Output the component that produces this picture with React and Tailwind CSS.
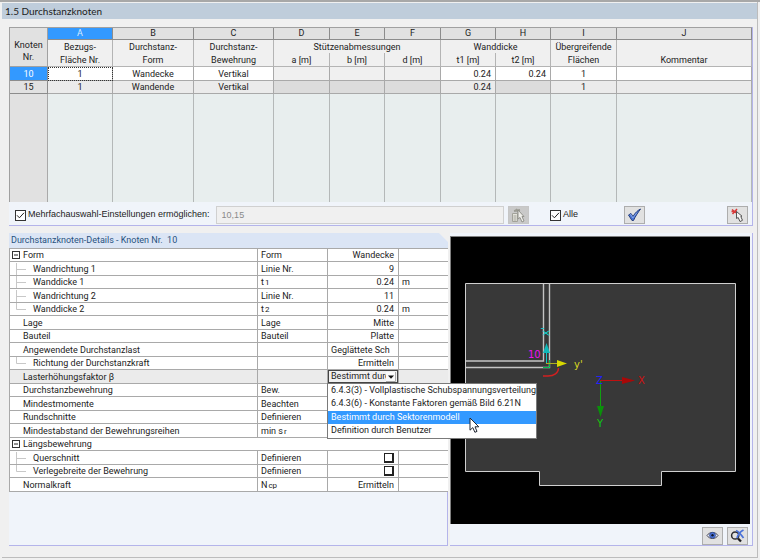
import { useState } from 'react';
import clsx from 'clsx';

const letters = ['A', 'B', 'C', 'D', 'E', 'F', 'G', 'H', 'I', 'J'];

const nodes = [
  { nr: '10', cells: ['1', 'Wandecke', 'Vertikal', null, null, null, '0.24', '0.24', '1', ''] },
  { nr: '15', cells: ['1', 'Wandende', 'Vertikal', null, null, null, '0.24', null, '1', ''] },
];

const methods = [
  '6.4.3(3) - Vollplastische Schubspannungsverteilung',
  '6.4.3(6) - Konstante Faktoren gemäß Bild 6.21N',
  'Bestimmt durch Sektorenmodell',
  'Definition durch Benutzer',
];

const details = [
  { tree: 'open', label: 'Form', symbol: 'Form', value: 'Wandecke' },
  { tree: 'child', label: 'Wandrichtung 1', symbol: 'Linie Nr.', value: '9' },
  { tree: 'child', label: 'Wanddicke 1', symbol: 't', sub: '1', value: '0.24', unit: 'm' },
  { tree: 'child', label: 'Wandrichtung 2', symbol: 'Linie Nr.', value: '11' },
  { tree: 'last', label: 'Wanddicke 2', symbol: 't', sub: '2', value: '0.24', unit: 'm' },
  { label: 'Lage', symbol: 'Lage', value: 'Mitte' },
  { label: 'Bauteil', symbol: 'Bauteil', value: 'Platte' },
  { label: 'Angewendete Durchstanzlast', value: 'Geglättete Sch', left: true },
  { tree: 'last', label: 'Richtung der Durchstanzkraft', value: 'Ermitteln' },
  { label: 'Lasterhöhungsfaktor β', select: true },
  { label: 'Durchstanzbewehrung', symbol: 'Bew.' },
  { label: 'Mindestmomente', symbol: 'Beachten' },
  { label: 'Rundschnitte', symbol: 'Definieren' },
  { label: 'Mindestabstand der Bewehrungsreihen', symbol: 'min s', sub: 'r' },
  { tree: 'open', label: 'Längsbewehrung', group: true },
  { tree: 'child', label: 'Querschnitt', symbol: 'Definieren', check: true },
  { tree: 'last', label: 'Verlegebreite der Bewehrung', symbol: 'Definieren', check: true },
  { label: 'Normalkraft', symbol: 'N', sub: 'cp', value: 'Ermitteln' },
];

function ToolButton({ label, disabled, className, children }) {
  return (
    <button
      type="button"
      aria-label={label}
      disabled={disabled}
      className={clsx(
        'flex h-[18px] w-[21px] items-center justify-center border',
        disabled ? 'border-[#c6c6c6] bg-[#c9c9c9]' : 'border-[#adadad] bg-[#e1e1e1]',
        className
      )}
    >
      {children}
    </button>
  );
}

function CheckBox({ id, label }) {
  return (
    <div className="flex items-center gap-[2px]">
      <span className="relative flex">
        <input
          id={id}
          type="checkbox"
          defaultChecked
          className="h-[11px] w-[11px] appearance-none border border-[#333] bg-white"
        />
        <svg className="pointer-events-none absolute inset-0" width="11" height="11" viewBox="0 0 11 11" fill="none" stroke="#222">
          <path d="M2 5.3 4.4 7.8 9 2.8" />
        </svg>
      </span>
      <label htmlFor={id}>{label}</label>
    </div>
  );
}

function Pointer({ className }) {
  return (
    <svg className={className} width="11" height="17" viewBox="0 0 11 17">
      <path d="M1 1V13.2L3.8 10.6 5.9 15.3 8 14.4 6 9.8H9.8Z" fill="#fff" stroke="#222733" />
    </svg>
  );
}

function TreeMark({ kind }) {
  if (!kind) return <span className="w-[13px]" />;
  if (kind === 'open') {
    return (
      <svg className="shrink-0" width="13" height="12" viewBox="0 0 13 12" fill="none">
        <rect x="2.5" y="2.5" width="7" height="7" stroke="#333" />
        <path d="M4 6H8" stroke="#222" />
      </svg>
    );
  }
  return (
    <svg className="shrink-0 overflow-visible" width="23" height="12" viewBox="0 0 23 12" fill="none" stroke="#c8c8c8">
      <path d={kind === 'last' ? 'M6.5 0V6.5H16' : 'M6.5 0V12M6.5 6.5H16'} />
    </svg>
  );
}

function NodeTable() {
  const head = 'border-r border-[#b4b4b4] p-0 font-normal';
  return (
    <table className="w-full table-fixed border-separate border-spacing-0 border-l border-t border-[#a0a0a0] text-center leading-[12px]">
      <colgroup>
        <col className="w-[38px]" />
        <col className="w-[65px]" />
        <col className="w-[81px]" />
        <col className="w-[80px]" />
        <col className="w-[56px]" />
        <col className="w-[55px]" />
        <col className="w-[56px]" />
        <col className="w-[55px]" />
        <col className="w-[55px]" />
        <col className="w-[66px]" />
        <col />
      </colgroup>
      <thead className="bg-[#f0f0f0]">
        <tr className="h-[12px]">
          <th rowSpan={3} className="border-b border-r border-[#a0a0a0] bg-[#e1e1e1] p-0 pt-[8px] font-normal">
            Knoten
            <br />
            Nr.
          </th>
          {letters.map((l) => (
            <th
              key={l}
              className={clsx(
                'border-b border-r border-[#8c8c8c] p-0 font-normal leading-[11px]',
                l === 'A' ? 'bg-[#3399ff] text-[#d8ecff]' : 'bg-[#e1e1e1]'
              )}
            >
              {l}
            </th>
          ))}
        </tr>
        <tr className="h-[13px]">
          <th className={head}>Bezugs-</th>
          <th className={head}>Durchstanz-</th>
          <th className={head}>Durchstanz-</th>
          <th colSpan={3} className={head}>Stützenabmessungen</th>
          <th colSpan={2} className={head}>Wanddicke</th>
          <th className={head}>Übergreifende</th>
          <th className={head} />
        </tr>
        <tr className="h-[14px]">
          {['Fläche Nr.', 'Form', 'Bewehrung', 'a [m]', 'b [m]', 'd [m]', 't1 [m]', 't2 [m]', 'Flächen', 'Kommentar'].map((t) => (
            <th key={t} className={clsx(head, 'border-b')}>{t}</th>
          ))}
        </tr>
      </thead>
      <tbody>
        {nodes.map((n, row) => (
          <tr key={n.nr} className={row === 0 ? 'h-[14px] bg-white' : 'h-[13px] bg-[#ebebeb]'}>
            <th
              className={clsx(
                'border-b border-r border-[#8c8c8c] p-0 font-normal',
                row === 0 ? 'bg-[#3399ff] text-white' : 'bg-[#e1e1e1]'
              )}
            >
              {n.nr}
            </th>
            {n.cells.map((c, i) => (
              <td
                key={letters[i]}
                className={clsx(
                  'border-b border-r border-[#a9a9a9] p-0',
                  c === null && (row === 0 ? 'bg-[#f0f0f0]' : 'bg-[#dcdcdc]'),
                  (i === 6 || i === 7) && 'pr-[4px] text-right',
                  row === 0 && i === 0 && 'outline-1 -outline-offset-1 outline-dotted outline-[#333]'
                )}
              >
                {c}
              </td>
            ))}
          </tr>
        ))}
        <tr className="h-[108px]">
          <td className="border-r border-[#a9a9a9] bg-[#e1e1e1]" />
          {letters.map((l) => (
            <td key={l} className="border-r border-[#b4b8b8] bg-[#e8eeee]" />
          ))}
        </tr>
      </tbody>
    </table>
  );
}

function NodeToolbar() {
  return (
    <div className="flex h-[23px] items-center pl-[6px] pr-[4px] pt-[3px] font-['Liberation_Sans'] text-[9px]">
      <CheckBox id="multi" label="Mehrfachauswahl-Einstellungen ermöglichen:" />
      <input
        aria-label="Knoten"
        disabled
        defaultValue="10,15"
        className="ml-[6px] h-[18px] min-w-0 flex-1 border border-[#d0d0d0] bg-[#f0f0f0] px-[5px] text-[#8a8a8a]"
      />
      <ToolButton label="Auswahl übernehmen" disabled className="ml-[4px] mr-[21px]">
        <svg width="15" height="15" viewBox="0 0 15 15" fill="none">
          <path d="M1.5 5.5H6.5V13.5H1.5Z" fill="#e4e4dc" stroke="#a2a29a" />
          <path d="M2.5 8H5.5M2.5 10H5.5M2.5 12H5.5" stroke="#a2a29a" />
          <path d="M3 3 9 2M5 1 8 5" stroke="#9c9c94" strokeWidth="2" />
          <path d="M7 2V11L9 9.5 11 14 13 13 11 8.5H13Z" fill="#eeeeea" stroke="#92928c" />
        </svg>
      </ToolButton>
      <CheckBox id="all" label="Alle" />
      <div className="flex w-[170px] justify-between pl-[46px]">
        <ToolButton label="Anwenden">
          <svg width="15" height="14" viewBox="0 0 15 14">
            <path d="M1.5 7 4 5.5 6 8.5C8 5 10.5 2.5 13.5 1 11 4.5 8.5 8 6.5 12.5H5Z" fill="#4a74d4" stroke="#27407f" strokeWidth="1" />
            <path d="M2.8 7 4 6.5 5.8 10 10 4.5" fill="none" stroke="#8fadf0" strokeWidth=".8" />
          </svg>
        </ToolButton>
        <ToolButton label="Knoten wählen">
          <svg width="15" height="15" viewBox="0 0 15 15">
            <path d="M2 1.5 7 5.5M7 1 2.5 6M1.5 3.5H7" stroke="#d83a3a" strokeWidth="1.5" />
            <path d="M6.5 3.5V10.5L8.2 9.5 10 13.6 12.5 12.3 10.8 8.5 12 8.2Z" fill="#f4f4f4" stroke="#555" />
          </svg>
        </ToolButton>
      </div>
    </div>
  );
}

function MethodSelect() {
  const [method, setMethod] = useState(methods[2]);
  return (
    <div className="relative">
      <div className="flex h-[13px] items-center border border-[#444] bg-[#f0f0f0] pr-[1px]">
        <select
          aria-label="Lasterhöhungsfaktor β"
          value={method}
          onChange={(e) => setMethod(e.target.value)}
          className="h-[11px] min-w-0 flex-1 appearance-none pl-[2px] leading-[11px] outline-none"
        >
          {methods.map((m) => (
            <option key={m}>{m}</option>
          ))}
        </select>
        <svg className="shrink-0 bg-[#fafafa]" width="10" height="10" viewBox="0 0 10 10">
          <path d="M2 3.5H8L5 6.8Z" fill="#111" />
          <path d="M0 9.5H9.5V0" fill="none" stroke="#aaa" />
        </svg>
      </div>
      <ul
        role="listbox"
        className="absolute -left-px top-[13px] z-10 w-[210px] border border-[#7a7a7a] bg-white text-left"
      >
        {methods.map((m) => (
          <li
            key={m}
            role="option"
            aria-selected={m === method}
            onClick={() => setMethod(m)}
            className={clsx(
              'whitespace-nowrap pl-[3px] odd:h-[13px] even:h-[14px]',
              m === method && 'bg-[#3399ff] text-white'
            )}
          >
            {m}
          </li>
        ))}
        <Pointer className="pointer-events-none absolute left-[141px] top-[33px]" />
      </ul>
    </div>
  );
}

function DetailsTable() {
  return (
    <table className="w-full table-fixed border-separate border-spacing-0 border-l border-t border-[#a9a9a9] bg-white leading-[12px]">
      <colgroup>
        <col />
        <col className="w-[70px]" />
        <col className="w-[71px]" />
        <col className="w-[49px]" />
      </colgroup>
      <tbody>
        {details.map((d) => {
          const cell = clsx('border-b border-[#a9a9a9] p-0', !d.group && 'border-r');
          return (
            <tr key={d.label} className={clsx('odd:h-[13px] even:h-[14px]', d.select && 'bg-[#ebebeb]')}>
              <td className={cell}>
                <div className="flex h-[12px] items-center whitespace-nowrap">
                  <TreeMark kind={d.tree} />
                  {d.label}
                </div>
              </td>
              <td className={cell}>
                <div className="flex h-[12px] items-baseline pl-[3px]">
                  {d.symbol}
                  {d.sub && <span className="ml-px text-[8px]">{d.sub}</span>}
                </div>
              </td>
              <td className={cell}>
                {d.select ? (
                  <MethodSelect />
                ) : d.check ? (
                  <input
                    type="checkbox"
                    aria-label={d.label}
                    className="ml-auto mr-[4px] block h-[10px] w-[10px] appearance-none border border-b-2 border-r-2 border-[#222] bg-white"
                  />
                ) : (
                  <div className={d.left ? 'pl-[3px]' : 'pr-[4px] text-right'}>{d.value}</div>
                )}
              </td>
              <td className="border-b border-[#a9a9a9] p-0 pl-[3px]">{d.unit}</td>
            </tr>
          );
        })}
      </tbody>
    </table>
  );
}

function Drawing() {
  return (
    <svg viewBox="451 237 299 287" className="block w-full flex-1 bg-black" fill="none" fontFamily="DejaVu Sans, sans-serif" fontSize="10">
      <path d="M465.5 283.5H735.5V471.5H661.5V485.5H539.5V471.5H465.5Z" fill="#383838" stroke="#d0d0d0" />
      <path d="M466 361H543.5V284M466 367.5H549.5V284" stroke="#c4c4c4" strokeWidth="1.4" />
      <text x="528" y="358" fill="#f010f0">10</text>

      {/* local axes of the wall corner */}
      <path d="M543 367.5H549.5V360" stroke="#00c050" />
      <path d="M546.5 364V352" stroke="#10c8c8" />
      <path d="M546.5 343 543 353H550Z" fill="#10b8b8" />
      <path d="M546 363.5H558" stroke="#b0b020" />
      <path d="M567 363.5 557 360V367Z" fill="#d8d800" />
      <text x="574" y="368" fill="#d8d820">y'</text>
      <text transform="translate(549 336) rotate(-90)" fill="#10d8d8">x'</text>
      <path d="M543 376H548C554 376 558.5 373 558.5 368" stroke="#d02020" strokeWidth="1.4" />

      {/* global axes */}
      <path d="M600 380.5H623" stroke="#c01010" />
      <path d="M635 380.5 622 377V384Z" fill="#a80808" />
      <path d="M600.5 381V407" stroke="#10a010" />
      <path d="M600.5 417 597 406H604Z" fill="#0a900a" />
      <text x="596" y="384" fill="#2020ff">Z</text>
      <text x="638" y="384" fill="#d01010">X</text>
      <text x="597" y="427" fill="#10c810">Y</text>
    </svg>
  );
}

export default function App() {
  return (
    <div className="flex min-h-screen flex-col border-t-2 border-[#a8a8a8] bg-[#f0f0f0] pb-[2px] pl-[2px] pr-[2px] font-['Roboto','Liberation_Sans',sans-serif] text-[9px] text-[#222]">
      <main className="flex flex-1 flex-col border-b border-r border-[#bcbcbc] pt-px">
        <h1 className="h-[16px] bg-[#bfcddb] pl-[3px] font-['Lato',sans-serif] text-[10px] leading-[17px] text-[#1c1c1c]">
          1.5 Durchstanzknoten
        </h1>

        <div className="flex flex-1 flex-col gap-[7px] pb-[11px] pl-[7px] pr-[4px] pt-[8px]">
          <section className="border-b border-r border-[#b4b4ea] bg-[#f0f4fa]">
            <NodeTable />
            <NodeToolbar />
          </section>

          <div className="flex flex-1 gap-[2px]">
            <section className="flex min-w-0 flex-1 flex-col">
              <h2 className="h-[15px] bg-[#dbe5f5] pl-[2px] text-[9px] leading-[15px] text-[#28527f] [clip-path:polygon(0_0,calc(100%-9px)_0,100%_9px,100%_100%,0_100%)]">
                Durchstanzknoten-Details - Knoten Nr.&nbsp; 10
              </h2>
              <DetailsTable />
              <div className="flex-1 border-b border-r border-[#b4b4ea] bg-[#f0f4fa]" />
            </section>

            <section className="flex w-[303px] flex-col border-b border-r border-[#b4b4ea] bg-[#f0f4fa] pt-[3px]">
              <div className="mr-[2px] flex flex-1 border-l border-t border-[#808080]">
                <Drawing />
              </div>
              <div className="flex h-[21px] items-center justify-end gap-[4px] pr-[4px] pt-[2px]">
                <ToolButton label="Anzeigen">
                  <svg width="13" height="11" viewBox="0 0 13 11">
                    <path d="M1 5.5C3.5 1.5 9.5 1.5 12 5.5 9.5 9.5 3.5 9.5 1 5.5Z" fill="#e8ecf8" stroke="#4a4a58" />
                    <circle cx="6.5" cy="5.3" r="3" fill="#4a72d8" stroke="#28407c" strokeWidth=".6" />
                    <circle cx="6.5" cy="5.3" r="1.2" fill="#101828" />
                  </svg>
                </ToolButton>
                <ToolButton label="Ansicht zurücksetzen">
                  <svg width="15" height="14" viewBox="0 0 15 14" fill="none">
                    <circle cx="5.2" cy="6.5" r="3.6" stroke="#2c2c30" strokeWidth="1.5" />
                    <path d="M8 9.4 11 12.6" stroke="#1c1c20" strokeWidth="2.2" />
                    <path d="M6 1.5C8.5 2.5 11 5.5 13.5 9M13.5 1C10.5 2.5 8 5.5 7 9" stroke="#4a72d8" strokeWidth="1.8" />
                  </svg>
                </ToolButton>
              </div>
            </section>
          </div>
        </div>
      </main>
    </div>
  );
}
